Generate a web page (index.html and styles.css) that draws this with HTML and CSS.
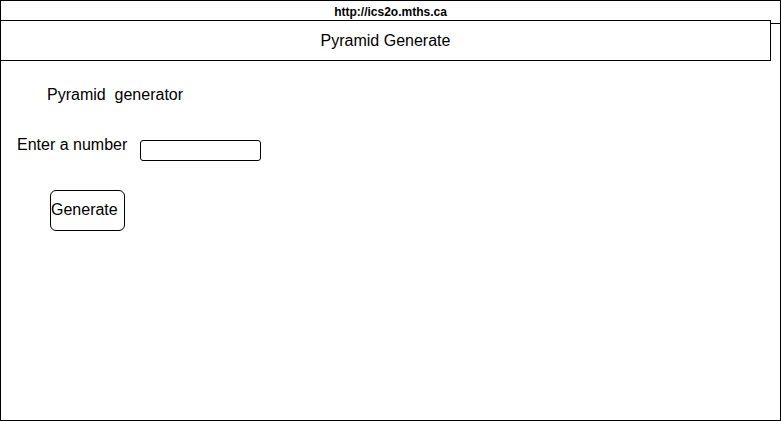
FILE: index.html
```html
<!DOCTYPE html>
<html>
<head>
<meta charset="utf-8">
<link rel="stylesheet" href="styles.css">
</head>
<body>
<div class="frame">
  <div class="urlbar">http://ics2o.mths.ca</div>
  <div class="header">Pyramid Generate</div>
  <div class="title">Pyramid&nbsp; generator</div>
  <div class="row">
    <label class="label" for="num">Enter a number</label>
    <input class="field" id="num" type="text">
  </div>
  <button class="btn" type="button">Generate</button>
</div>
</body>
</html>
```
FILE: styles.css
```css
html, body {
  margin: 0;
  padding: 0;
  background: #ffffff;
}
body {
  font-family: "Liberation Sans", Arial, Helvetica, sans-serif;
  color: #000000;
}
.frame {
  box-sizing: border-box;
  width: 781px;
  height: 421px;
  border: 1px solid #000000;
  display: flex;
  flex-direction: column;
  align-items: flex-start;
  overflow: hidden;
}
.urlbar {
  align-self: stretch;
  height: 22px;
  line-height: 22px;
  border-bottom: 1px solid #000000;
  font-size: 12px;
  font-weight: bold;
  text-align: center;
}
.header {
  box-sizing: border-box;
  width: 771px;
  height: 41px;
  margin: -4px 0 0 -1px;
  border: 1px solid #000000;
  background: #ffffff;
  font-size: 16px;
  line-height: 39px;
  text-align: center;
}
.title {
  margin: 25px 0 0 46px;
  font-size: 16px;
  line-height: 18px;
}
.row {
  display: flex;
  align-items: flex-start;
  margin: 32px 0 0 16px;
}
.label {
  font-size: 16px;
  line-height: 18px;
}
.field {
  box-sizing: border-box;
  width: 121px;
  height: 21px;
  margin: 4px 0 0 13px;
  padding: 0;
  border: 1px solid #000000;
  border-radius: 3px;
  background: #ffffff;
  outline: none;
}
.btn {
  box-sizing: border-box;
  width: 75px;
  height: 41px;
  margin: 29px 0 0 49px;
  padding: 0 0 1px 0;
  border: 1px solid #000000;
  border-radius: 6px;
  background: #ffffff;
  color: #000000;
  font-family: "Liberation Sans", Arial, Helvetica, sans-serif;
  font-size: 16px;
  text-align: left;
}
```
